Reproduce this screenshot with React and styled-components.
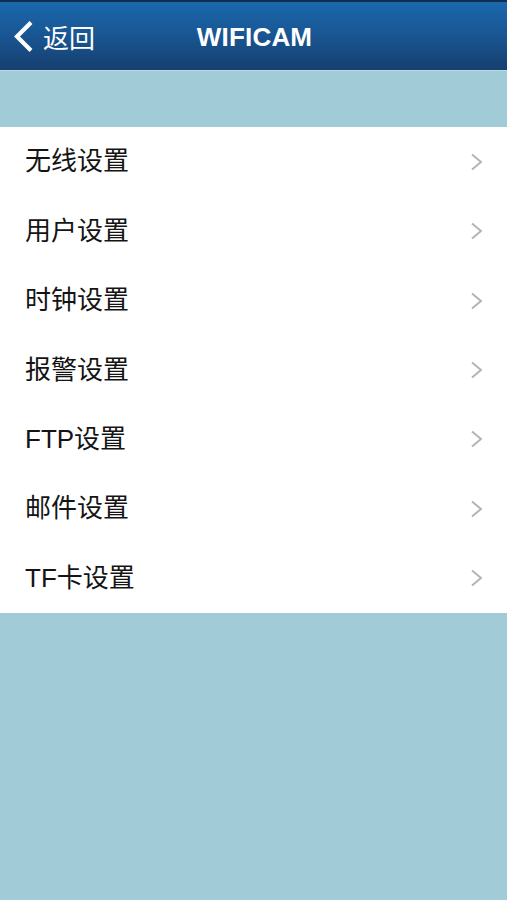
import React from "react";
import styled, { createGlobalStyle } from "styled-components";

const Global = createGlobalStyle`
  html, body { margin: 0; padding: 0; }
  body {
    background: #a2cbd8;
    font-family: "Liberation Sans", "Noto Sans CJK SC", sans-serif;
  }
`;

const Page = styled.div`
  width: 507px;
  min-height: 900px;
  background: #a2cbd8;
  display: flex;
  flex-direction: column;
`;

const NavBar = styled.header`
  position: relative;
  height: 68px;
  border-top: 2px solid #0f2f55;
  border-bottom: 1px solid #b9dbe6;
  background: linear-gradient(to bottom, #1a68ad 0%, #195592 50%, #163f6e 100%);
  display: flex;
  align-items: center;
  justify-content: center;
`;

const BackButton = styled.div`
  position: absolute;
  left: 13px;
  top: 0;
  bottom: 0;
  display: flex;
  align-items: center;
  gap: 9px;
  color: #ffffff;
  font-size: 26px;
  font-family: "Noto Sans CJK SC", sans-serif;
`;

const Title = styled.h1`
  margin: 0 0 0 2px;
  padding-top: 2px;
  color: #ffffff;
  font-size: 26px;
  font-weight: bold;
  font-family: "Liberation Sans", Arial, sans-serif;
  letter-spacing: 0.2px;
`;

const Spacer = styled.div`
  height: 56px;
`;

const List = styled.ul`
  list-style: none;
  margin: 0;
  padding: 0;
  background: #ffffff;
`;

const Row = styled.li`
  height: 69.45px;
  display: flex;
  align-items: center;
  justify-content: space-between;
  padding: 0 23px 0 25px;
  box-sizing: border-box;
`;

const Label = styled.span`
  font-size: 26px;
  line-height: 1;
  padding-bottom: 1px;
  color: #141414;
  font-family: "Liberation Sans", "Noto Sans CJK SC", sans-serif;
`;

const Chevron = () => (
  <svg width="14" height="18" viewBox="0 0 14 18">
    <path d="M2 1.5 L11 9 L2 16.5" fill="none" stroke="#b4b4b4" strokeWidth="2" />
  </svg>
);

const BackChevron = () => (
  <svg width="21" height="33" viewBox="0 0 21 33">
    <path d="M18 2.5 L4 16.5 L18 30.5" fill="none" stroke="#ffffff" strokeWidth="4.2" />
  </svg>
);

const items = ["无线设置", "用户设置", "时钟设置", "报警设置", "FTP设置", "邮件设置", "TF卡设置"];

export default function App() {
  return (
    <Page>
      <Global />
      <NavBar>
        <BackButton>
          <BackChevron />
          <span>返回</span>
        </BackButton>
        <Title>WIFICAM</Title>
      </NavBar>
      <Spacer />
      <List>
        {items.map((t) => (
          <Row key={t}>
            <Label>{t}</Label>
            <Chevron />
          </Row>
        ))}
      </List>
    </Page>
  );
}
